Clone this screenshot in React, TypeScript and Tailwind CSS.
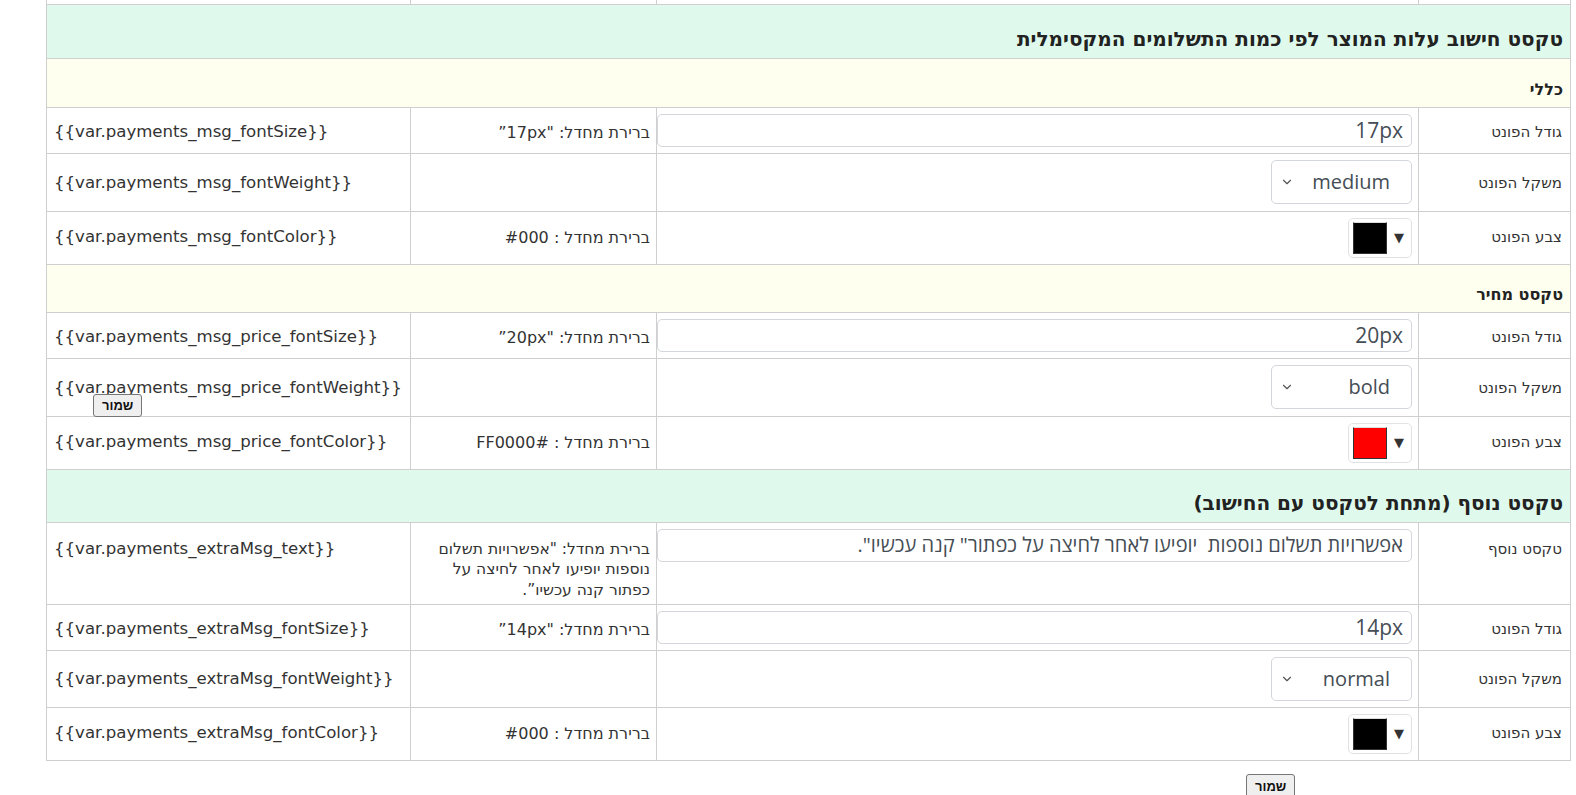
import { ChevronDown } from 'lucide-react';

type Row =
  | { kind: 'input'; label: string; value: string; def: string; v: string }
  | { kind: 'select'; label: string; value: string; v: string }
  | { kind: 'color'; label: string; color: string; def: string; v: string };

const BODY = '[font-family:"DejaVu_Sans",Arial,sans-serif]';

function Section({ title, tall }: { title: string; tall?: boolean }) {
  return (
    <tr className="bg-[#dffaec]">
      <td
        colSpan={4}
        className={`${tall ? 'h-[54px]' : 'h-[53px]'} border border-[#cfcfcf] px-[7px] pb-[4px] align-bottom text-[20px] font-bold text-[#222]`}
      >
        {title}
      </td>
    </tr>
  );
}

function Sub({ title, h }: { title: string; h: string }) {
  return (
    <tr className="bg-[#fffff0]">
      <td colSpan={4} className={`${h} border border-[#cfcfcf] px-[7px] pb-[5px] align-bottom text-[16px] font-bold text-[#222]`}>
        {title}
      </td>
    </tr>
  );
}

function Field({ row, last }: { row: Row; last?: boolean }) {
  const h = row.kind === 'input' ? 'h-[46px]' : row.kind === 'select' ? (last ? 'h-[57px]' : 'h-[58px]') : 'h-[53px]';
  const cell = `${h} border border-[#cfcfcf] align-middle`;
  // text cells sit on the input's baseline, a little lower in the input rows
  const txt = row.kind === 'input' ? 'pt-[5px]' : row.kind === 'select' ? 'pt-[2px]' : '';
  return (
    <tr className="bg-white">
      <td className={`${cell} ${txt} px-[8px] text-[15px] text-[#333]`}>{row.label}</td>
      <td className={`${cell} p-0`}>
        {row.kind === 'input' && (
          <div className="pr-[6px]">
            <div className="h-[33px] rounded-[5px] border border-[#d3d6da] px-[8px] text-[21px] leading-[30px] text-[#454d55] [font-family:'Open_Sans',sans-serif]">
              {row.value}
            </div>
          </div>
        )}
        {row.kind === 'select' && (
          <div className="flex pr-[6px]">
            <div className="flex h-[44px] w-[141px] items-center justify-between rounded-[5px] border border-[#d3d6da] pr-[21px] pl-[8px] text-[20px] text-[#454d55] [font-family:'Open_Sans',sans-serif]">
              <span>{row.value}</span>
              <ChevronDown size={14} strokeWidth={2} className="text-[#555]" />
            </div>
          </div>
        )}
        {row.kind === 'color' && (
          <div className="flex pr-[6px]">
            <div dir="ltr" className="flex h-[40px] w-[64px] items-center gap-[7px] rounded-[5px] border border-[#e2e2e2] pr-[5px] pl-[4px]">
              <div className="h-[32px] w-[34px] border border-[#333] border-t-[#ddd]" style={{ backgroundColor: row.color }} />
              <span className="text-[13px] text-[#333]">▼</span>
            </div>
          </div>
        )}
      </td>
      <td className={`${cell} ${txt} px-[6px] text-[16px] text-[#333]`}>{'def' in row ? row.def : ''}</td>
      <td className={`${cell} ${txt} px-[7px] text-[16.6px] text-[#333]`} dir="ltr">
        {row.v}
      </td>
    </tr>
  );
}

const general: Row[] = [
  { kind: 'input', label: 'גודל הפונט', value: '17px', def: 'ברירת מחדל: "17px”', v: '{{var.payments_msg_fontSize}}' },
  { kind: 'select', label: 'משקל הפונט', value: 'medium', v: '{{var.payments_msg_fontWeight}}' },
  { kind: 'color', label: 'צבע הפונט', color: '#000000', def: 'ברירת מחדל : #000', v: '{{var.payments_msg_fontColor}}' },
];

const price: Row[] = [
  { kind: 'input', label: 'גודל הפונט', value: '20px', def: 'ברירת מחדל: "20px”', v: '{{var.payments_msg_price_fontSize}}' },
  { kind: 'select', label: 'משקל הפונט', value: 'bold', v: '{{var.payments_msg_price_fontWeight}}' },
  { kind: 'color', label: 'צבע הפונט', color: '#ff0000', def: 'ברירת מחדל : #FF0000', v: '{{var.payments_msg_price_fontColor}}' },
];

const extra: Row[] = [
  { kind: 'input', label: 'גודל הפונט', value: '14px', def: 'ברירת מחדל: "14px”', v: '{{var.payments_extraMsg_fontSize}}' },
  { kind: 'select', label: 'משקל הפונט', value: 'normal', v: '{{var.payments_extraMsg_fontWeight}}' },
  { kind: 'color', label: 'צבע הפונט', color: '#000000', def: 'ברירת מחדל : #000', v: '{{var.payments_extraMsg_fontColor}}' },
];

export default function App() {
  return (
    <div className={`relative h-[795px] w-[1576px] overflow-hidden bg-white pl-[46px] ${BODY}`}>
      <table dir="rtl" className="w-[1524px] table-fixed border-collapse">
        <colgroup>
          <col className="w-[152px]" />
          <col className="w-[762px]" />
          <col className="w-[246px]" />
          <col className="w-[364px]" />
        </colgroup>
        <tbody>
          <tr>
            <td className="h-[4px] border-x border-b border-[#cfcfcf] p-0" />
            <td className="border-x border-b border-[#cfcfcf] p-0" />
            <td className="border-x border-b border-[#cfcfcf] p-0" />
            <td className="border-x border-b border-[#cfcfcf] p-0" />
          </tr>
          <Section tall title="טקסט חישוב עלות המוצר לפי כמות התשלומים המקסימלית" />
          <Sub h="h-[49px]" title="כללי" />
          {general.map((r, i) => <Field key={i} row={r} />)}
          <Sub h="h-[48px]" title="טקסט מחיר" />
          {price.map((r, i) => <Field key={i} row={r} />)}
          <Section title="טקסט נוסף (מתחת לטקסט עם החישוב)" />
          <tr className="bg-white">
            <td className="h-[82px] border border-[#cfcfcf] px-[8px] pt-[15px] align-top text-[15px] text-[#333]">טקסט נוסף</td>
            <td className="border border-[#cfcfcf] p-0 align-top">
              <div className="pt-[6px] pr-[6px]">
                <div className="h-[33px] rounded-[5px] border border-[#d3d6da] px-[8px] text-[20px] leading-[30px] text-[#454d55] [font-family:'Open_Sans',sans-serif] whitespace-pre">
                  {'אפשרויות תשלום נוספות  יופיעו לאחר לחיצה על כפתור" קנה עכשיו".'}
                </div>
              </div>
            </td>
            <td className="border border-[#cfcfcf] px-[6px] pt-[16px] align-top text-[15.5px] leading-[20.5px] text-[#333]">
              <div className="max-w-[222px]">ברירת מחדל: "אפשרויות תשלום נוספות יופיעו לאחר לחיצה על כפתור קנה עכשיו”.</div>
            </td>
            <td className="border border-[#cfcfcf] px-[7px] pt-[14px] align-top text-[16.6px] text-[#333]" dir="ltr">
              {'{{var.payments_extraMsg_text}}'}
            </td>
          </tr>
          {extra.map((r, i) => <Field key={i} row={r} last={i === 1} />)}
        </tbody>
      </table>

      <div className="pt-[13px] pl-[1200px]">
        <button className="h-[25px] rounded-[3px] border border-[#767676] bg-[#efefef] px-[8px] text-[13px] font-bold text-[#111] [font-family:Arial,sans-serif]">
          שמור
        </button>
      </div>

      <button className="absolute top-[394px] left-[93px] h-[23px] rounded-[3px] border border-[#767676] bg-[#efefef] px-[8px] text-[13px] font-bold text-[#111] [font-family:Arial,sans-serif]">
        שמור
      </button>
    </div>
  );
}
